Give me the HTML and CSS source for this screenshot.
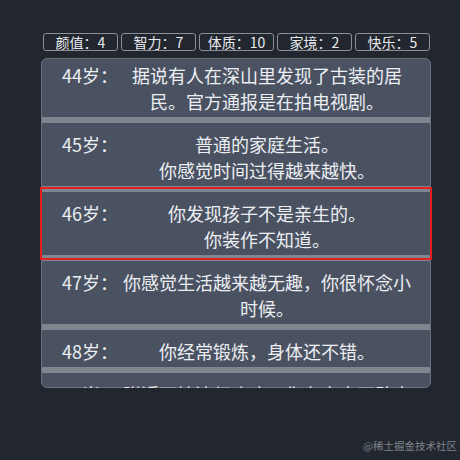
FILE: index.html
```html
<!DOCTYPE html>
<html lang="zh-CN">
<head>
  <meta charset="UTF-8">
  <meta name="viewport" content="width=device-width, initial-scale=1.0">
  <title>人生重开模拟器</title>
  <link rel="stylesheet" href="styles.css">
</head>
<body>

<div class="app">
  <div class="stats">
    <div class="stat">颜值：4</div>
    <div class="stat">智力：7</div>
    <div class="stat">体质：10</div>
    <div class="stat">家境：2</div>
    <div class="stat">快乐：5</div>
  </div>

  <ul class="events">
    <li class="event">
      <span class="age">44岁：</span>
      <span class="text">据说有人在深山里发现了古装的居民。官方通报是在拍电视剧。</span>
    </li>
    <li class="event">
      <span class="age">45岁：</span>
      <span class="text">普通的家庭生活。<br>你感觉时间过得越来越快。</span>
    </li>
    <li class="event current">
      <span class="age">46岁：</span>
      <span class="text">你发现孩子不是亲生的。<br>你装作不知道。</span>
    </li>
    <li class="event">
      <span class="age">47岁：</span>
      <span class="text">你感觉生活越来越无趣，你很怀念小时候。</span>
    </li>
    <li class="event">
      <span class="age">48岁：</span>
      <span class="text">你经常锻炼，身体还不错。</span>
    </li>
    <li class="event">
      <span class="age">49岁：</span>
      <span class="text">附近开始流行疫病，你在家中不敢出门。</span>
    </li>
  </ul>
</div>

<div class="credit">@稀土掘金技术社区</div>

</body>
</html>
```

FILE: styles.css
```css
/* Página */
body {
  margin: 0;
  height: 460px;
  position: relative;
  overflow: hidden;
  background-color: #22272f;
  color: #eceef2;
  font-family: "Noto Sans CJK SC", "Noto Sans", sans-serif;
}

.app {
  width: 390px;
  padding: 33px 0 0 41px;
}

/* Atributos no topo */
.stats {
  display: grid;
  grid-template-columns: repeat(5, 1fr);
  gap: 3px;
  padding: 0 1px 0 2px;
}

.stat {
  border: 1px solid #8a8f98;
  border-radius: 3px;
  font-size: 14px;
  line-height: 16px;
  text-align: center;
  color: #e8eaee;
}

/* Lista de eventos (rolada um pouco para baixo) */
.events {
  list-style: none;
  margin: 7px 0 0;
  padding: 0;
  height: 330px;
  box-sizing: border-box;
  border: 1px solid #6b717c;
  border-radius: 6px;
  background-color: #4a5262;
  clip-path: inset(0 -3px round 6px);
}

.event {
  display: flex;
  padding: 8px 16px 3px 20px;
  border-top: 3px solid #80868f;
  border-bottom: 3px solid #80868f;
  font-size: 18px;
  line-height: 26px;
}

.event:first-child {
  margin-top: -8px;
}

.event.current {
  outline: 2px solid #e3201f;
}

.age {
  width: 58px;
  flex-shrink: 0;
  white-space: nowrap;
}

.text {
  flex: 1;
  text-align: center;
}

/* Marca no canto */
.credit {
  position: absolute;
  right: 3px;
  bottom: 7px;
  font-family: "Noto Sans CJK SC", serif;
  font-size: 10.5px;
  color: #7e838c;
  white-space: nowrap;
}
```
